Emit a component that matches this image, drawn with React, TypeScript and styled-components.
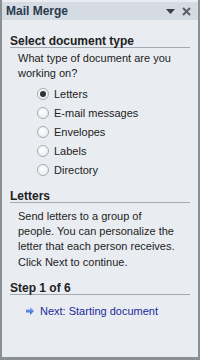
import styled, { createGlobalStyle } from "styled-components";

const GlobalStyle = createGlobalStyle`
  html, body {
    margin: 0;
    padding: 0;
    background: #e9edf2;
  }
  body {
    font-family: "Liberation Sans", Arial, sans-serif;
  }
`;

const options = ["Letters", "E-mail messages", "Envelopes", "Labels", "Directory"];

const Pane = styled.div`
  box-sizing: border-box;
  width: 200px;
  height: 360px;
  background: #e9edf2;
  border-left: 2px solid #8a8f96;
  border-right: 2px solid #8a8f96;
  border-bottom: 3px solid #8a8f96;
  display: flex;
  flex-direction: column;
  color: #222;
  font-size: 11px;
`;

const TitleBar = styled.div`
  margin-top: 2px;
  height: 18px;
  background: #d4dbe3;
  display: flex;
  align-items: center;
  padding: 0 4px 0 4px;
`;

const Title = styled.div`
  flex: 1;
  font-weight: bold;
  font-size: 12px;
  color: #2b3a4e;
`;

const TitleButton = styled.div`
  width: 16px;
  height: 16px;
  display: flex;
  align-items: center;
  justify-content: center;
`;

const Body = styled.div`
  display: flex;
  flex-direction: column;
  padding: 15px 8px 0 8px;
`;

const Heading = styled.div<{ $top?: number }>`
  font-weight: bold;
  font-size: 12px;
  line-height: 12px;
  color: #222;
  border-bottom: 1px solid #a3aab3;
  margin-top: ${(p) => p.$top ?? 0}px;
`;

const Para = styled.div<{ $top?: number; $lh?: number }>`
  margin-top: ${(p) => p.$top ?? 0}px;
  padding-left: 8px;
  line-height: ${(p) => p.$lh ?? 15}px;
`;

const Options = styled.div`
  display: flex;
  flex-direction: column;
  gap: 5px;
  padding-left: 27px;
  margin-top: 6px;
`;

const OptionRow = styled.label`
  display: flex;
  align-items: center;
  gap: 5px;
  height: 14px;
`;

const Radio = styled.span<{ $checked?: boolean }>`
  box-sizing: border-box;
  width: 12px;
  height: 12px;
  border-radius: 50%;
  border: 1px solid #a6abb2;
  background: radial-gradient(circle at 40% 35%, #ffffff, #e3e6ea);
  display: flex;
  align-items: center;
  justify-content: center;
  &::after {
    content: "";
    display: ${(p) => (p.$checked ? "block" : "none")};
    width: 6px;
    height: 6px;
    border-radius: 50%;
    background: #333;
  }
`;

const NextLink = styled.div`
  display: flex;
  align-items: center;
  gap: 6px;
  height: 14px;
  padding-left: 16px;
  margin-top: 9px;
  color: #1c2a9a;
`;

const App = () => (
  <>
    <GlobalStyle />
    <Pane>
      <TitleBar>
        <Title>Mail Merge</Title>
        <TitleButton>
          <svg width="9" height="5" viewBox="0 0 9 5">
            <path d="M0 0h9L4.5 5z" fill="#3a3f46" />
          </svg>
        </TitleButton>
        <TitleButton>
          <svg width="9" height="9" viewBox="0 0 9 9">
            <path d="M1 1l7 7M8 1l-7 7" stroke="#5a6068" strokeWidth="2" />
          </svg>
        </TitleButton>
      </TitleBar>
      <Body>
        <Heading>Select document type</Heading>
        <Para $top={3}>
          What type of document are you
          <br />
          working on?
        </Para>
        <Options>
          {options.map((o, i) => (
            <OptionRow key={o}>
              <Radio $checked={i === 0} />
              {o}
            </OptionRow>
          ))}
        </Options>
        <Heading $top={13}>Letters</Heading>
        <Para $top={6}>
          Send letters to a group of
          <br />
          people. You can personalize the
          <br />
          letter that each person receives.
        </Para>
        <Para $top={1}>Click Next to continue.</Para>
        <Heading $top={12}>Step 1 of 6</Heading>
        <NextLink>
          <svg width="8" height="8" viewBox="0 0 8 8">
            <defs>
              <linearGradient id="ag" x1="0" y1="0" x2="0" y2="1">
                <stop offset="0" stopColor="#8fb4f2" />
                <stop offset="1" stopColor="#2f5fd0" />
              </linearGradient>
            </defs>
            <path d="M0 2.5h4V0l4 4-4 4V5.5H0z" fill="url(#ag)" />
          </svg>
          Next: Starting document
        </NextLink>
      </Body>
    </Pane>
  </>
);

export default App;
